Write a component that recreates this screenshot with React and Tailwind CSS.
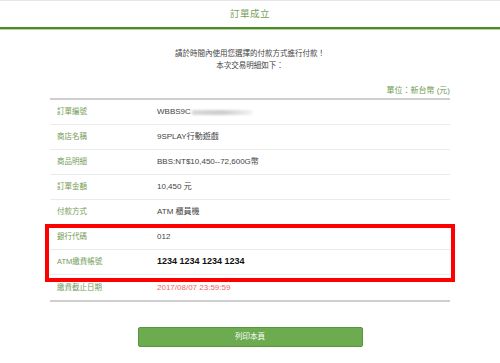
import React from "react";

const rows = [
  { label: "訂單編號", value: "WBBS9C", blur: true },
  { label: "商店名稱", value: "9SPLAY行動遊戲" },
  { label: "商品明細", value: "BBS:NT$10,450--72,600G幣" },
  { label: "訂單金額", value: "10,450 元" },
  { label: "付款方式", value: "ATM 櫃員機" },
  { label: "銀行代碼", value: "012" },
  { label: "ATM繳費帳號", value: "1234 1234 1234 1234", strong: true },
  { label: "繳費截止日期", value: "2017/08/07 23:59:59", red: true },
];

export default function App() {
  return (
    <div
      className="w-[500px] h-[363px] bg-white overflow-hidden"
      style={{ fontFamily: '"Liberation Sans", "Noto Sans CJK TC", sans-serif' }}
    >
      <div className="h-[29px] border-t border-[#e6e6e6] border-b-2 border-b-[#4e8b25] flex items-center justify-center text-[9.5px] text-[#76a05a] tracking-[0.5px]">
        訂單成立
      </div>
      <div className="h-px bg-[#b9d5a5]" />
      <div className="pt-[18px] text-center text-[7.5px] leading-[12px] text-[#444]">
        <div>請於時間內使用您選擇的付款方式進行付款！</div>
        <div>本次交易明細如下：</div>
      </div>
      <div className="mx-[50px] mt-[13px] text-right text-[8px] leading-[12px] text-[#6d9a4f]">
        單位：新台幣 (元)
      </div>
      <div className="relative mx-[50px] mt-px border-t-2 border-b-2 border-[#cfcfcf]">
        {rows.map((r, i) => (
          <div
            key={i}
            className={
              "h-[25px] flex items-center " +
              (i < rows.length - 1 ? "border-b border-[#ebebeb]" : "")
            }
          >
            <div className="w-[107px] pl-[7px] text-[7.5px] text-[#749a58]">{r.label}</div>
            <div
              className={
                "flex items-center " +
                (r.strong
                  ? "text-[9px] font-semibold text-[#111]"
                  : r.red
                  ? "text-[8px] text-[#f26262]"
                  : "text-[8px] text-[#444]")
              }
            >
              {r.value}
              {r.blur && (
                <span className="inline-block ml-px w-[60px] h-[5px] bg-linear-to-r from-[#d9d9d9] via-[#cccccc] to-[#f2f2f2] blur-[1px]" />
              )}
            </div>
          </div>
        ))}
        <div className="absolute left-[-5px] top-[124px] w-[410px] h-[58px] border-[4px] border-[#ff0000]" />
      </div>
      <div className="flex justify-center mt-[25px]">
        <div className="w-[225px] h-[20px] rounded-[2px] bg-[#6cab50] border border-[#58963c] flex items-center justify-center text-[7.5px] text-white">
          列印本頁
        </div>
      </div>
    </div>
  );
}
